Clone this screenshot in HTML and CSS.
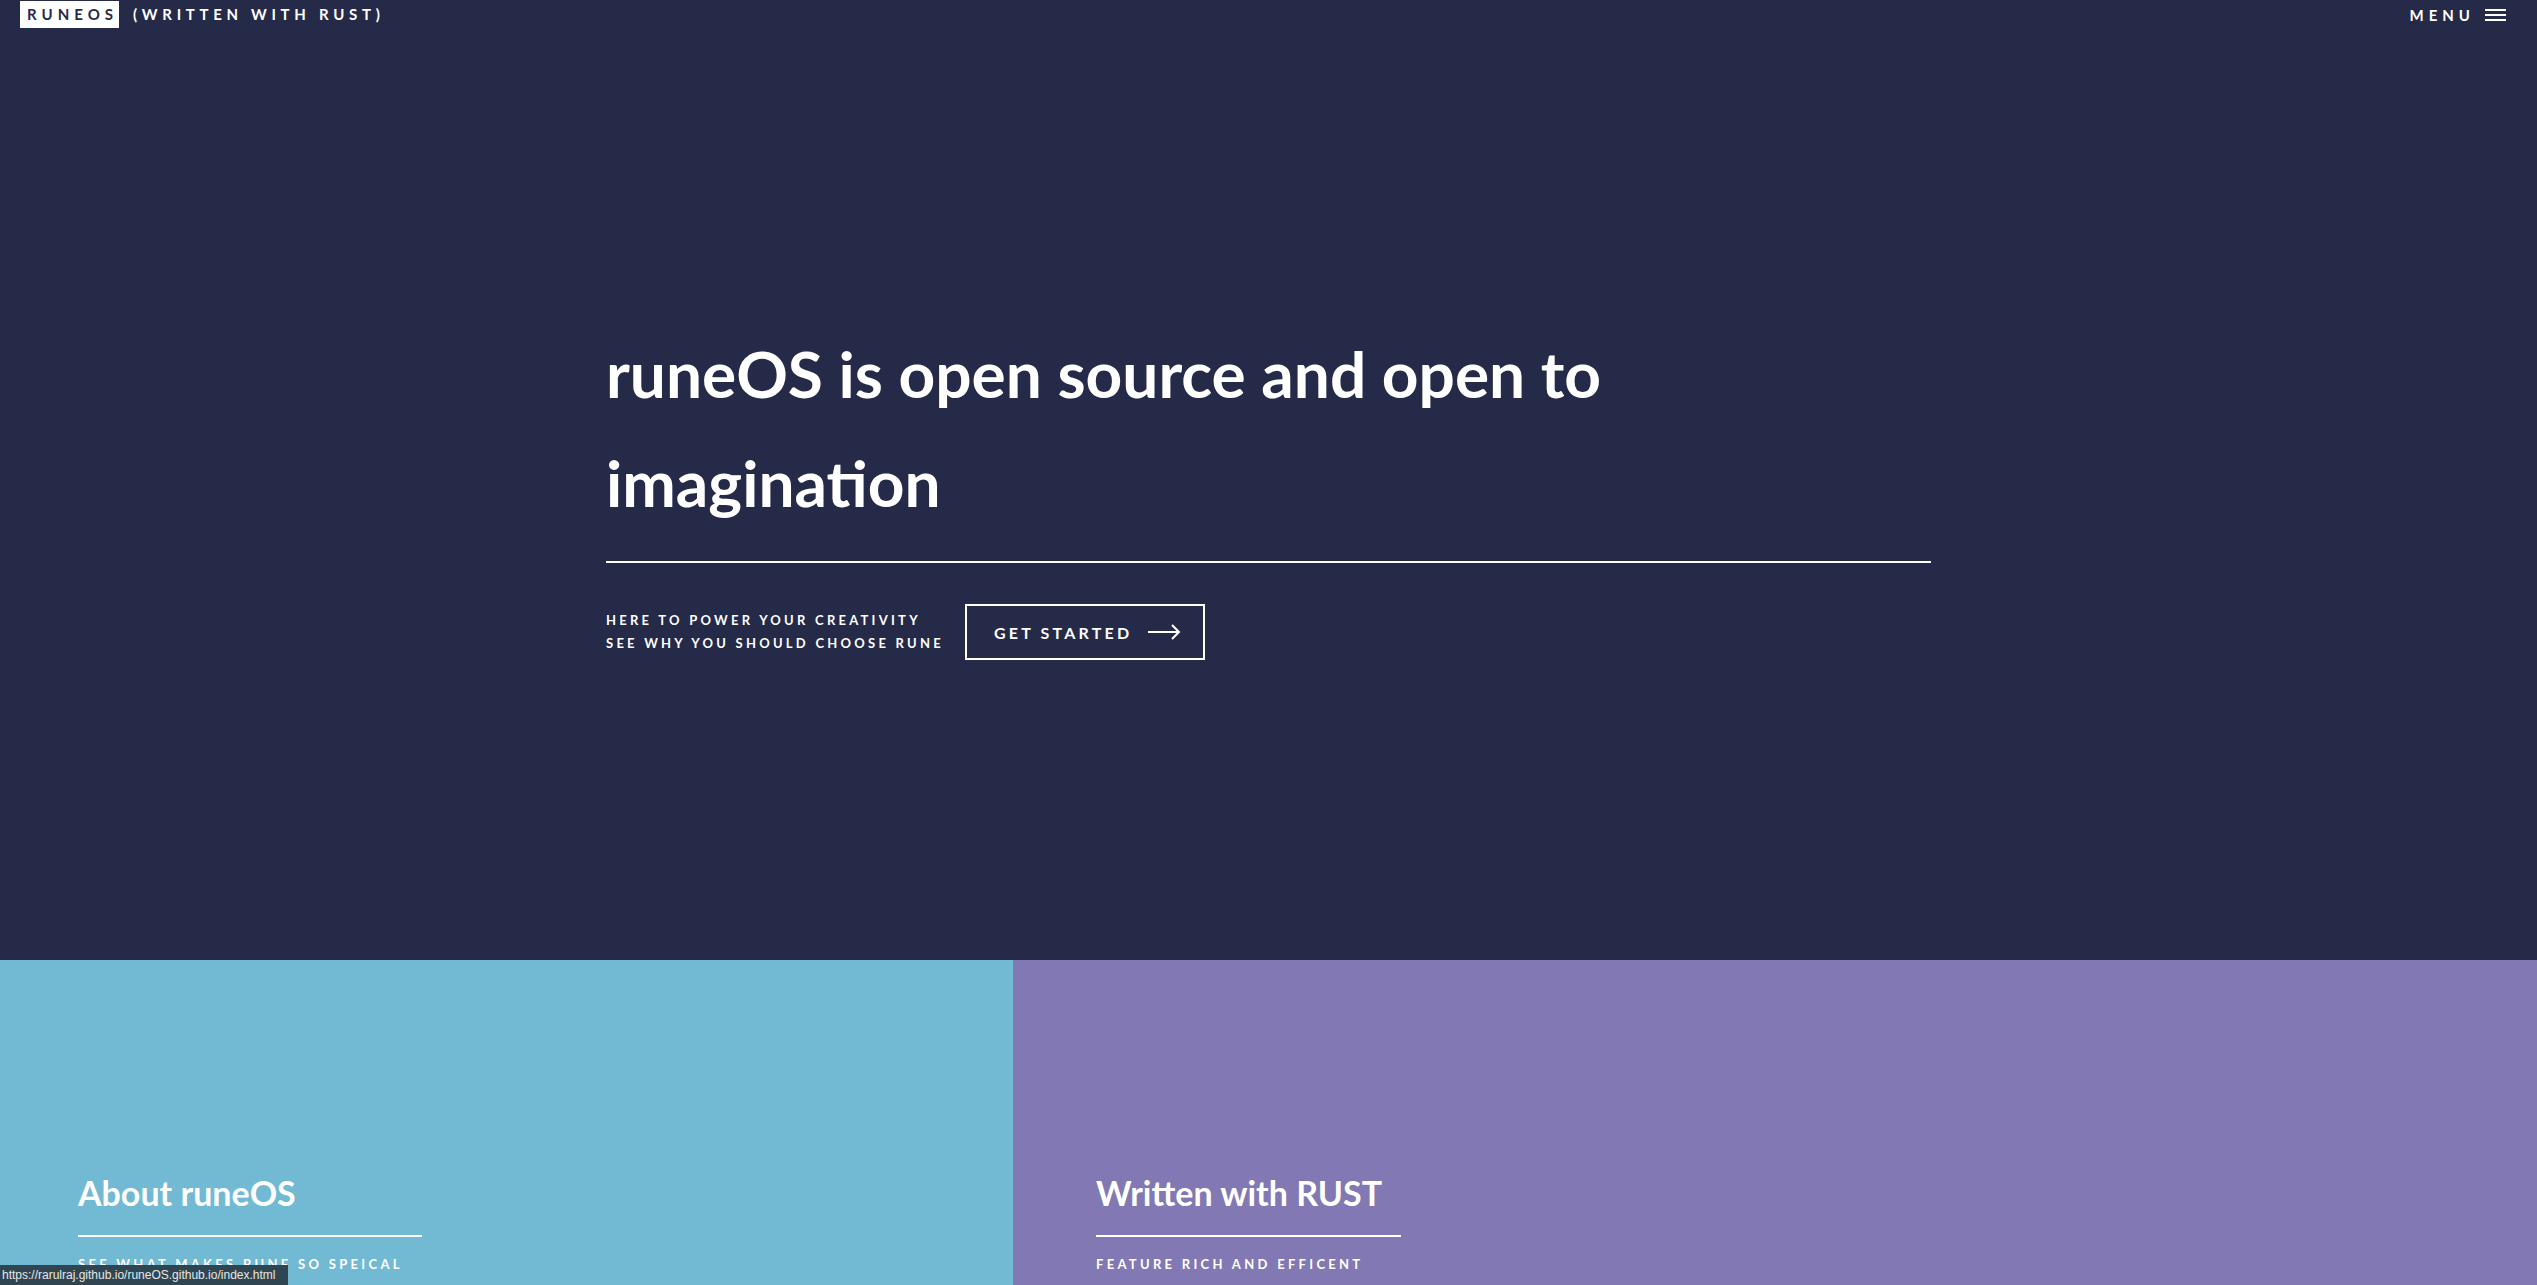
FILE: index.html
```html
<!DOCTYPE html>
<html lang="en">
<head>
<meta charset="utf-8">
<title>runeOS</title>
<link rel="stylesheet" href="styles.css">
</head>
<body>
<section class="hero">
  <header class="topbar">
    <div class="brand">
      <span class="logo">RUNEOS</span>
      <span class="tagline">(WRITTEN WITH RUST)</span>
    </div>
    <div class="menu">
      <span>MENU</span>
      <span class="burger"><i></i><i></i><i></i></span>
    </div>
  </header>
  <div class="hero-inner">
    <h1 class="title">runeOS is open source and open to imagination</h1>
    <div class="rule"></div>
    <div class="cta-row">
      <p class="cta-text">HERE TO POWER YOUR CREATIVITY<br>SEE WHY YOU SHOULD CHOOSE RUNE</p>
      <a class="btn" href="#">GET STARTED
        <svg class="arrow" width="33" height="16" viewBox="0 0 33 16"><path d="M0 8H31M24 1L31 8L24 15" fill="none" stroke="#fff" stroke-width="2"/></svg>
      </a>
    </div>
  </div>
</section>
<section class="panels">
  <div class="panel panel-about">
    <h2 class="panel-title">About runeOS</h2>
    <div class="panel-rule rule-about"></div>
    <p class="panel-sub">SEE WHAT MAKES RUNE SO SPEICAL</p>
  </div>
  <div class="panel panel-rust">
    <h2 class="panel-title">Written with RUST</h2>
    <div class="panel-rule rule-rust"></div>
    <p class="panel-sub">FEATURE RICH AND EFFICENT</p>
  </div>
</section>
<div class="status">https://rarulraj.github.io/runeOS.github.io/index.html</div>
</body>
</html>
```
FILE: styles.css
```css
* { box-sizing: border-box; }
html, body { margin: 0; padding: 0; }
body {
  font-family: "Lato", "Open Sans", sans-serif;
  color: #fff;
  background: #242a48;
  overflow: hidden;
}
.hero {
  height: 960px;
  background: #242a48;
  display: flex;
  flex-direction: column;
}
.topbar {
  display: flex;
  justify-content: space-between;
  align-items: flex-start;
  padding: 1px 31px 0 20px;
  height: 29px;
}
.brand { display: flex; align-items: center; gap: 14px; }
.logo {
  background: #fff;
  color: #242a48;
  font-weight: 700;
  font-size: 15px;
  letter-spacing: 5px;
  padding: 0 1px 0 7px;
  height: 27px;
  line-height: 27px;
}
.tagline {
  font-weight: 700;
  font-size: 15px;
  letter-spacing: 4.7px;
  line-height: 27px;
}
.menu {
  display: flex;
  align-items: center;
  gap: 10px;
  font-weight: 700;
  font-size: 15px;
  letter-spacing: 5px;
  height: 28px;
}
.burger { display: flex; flex-direction: column; gap: 3px; width: 21px; }
.burger i { display: block; height: 2px; background: #fff; }

.hero-inner {
  width: 1325px;
  margin: 0 auto;
  padding-top: 290px;
}
.title {
  margin: 0;
  font-weight: 700;
  font-size: 64px;
  line-height: 109px;
  width: 1080px;
}
.rule { height: 2px; background: #fff; margin-top: 24px; }
.cta-row {
  display: flex;
  align-items: center;
  gap: 21px;
  margin-top: 41px;
}
.cta-text {
  margin: 0;
  font-weight: 700;
  font-size: 13px;
  letter-spacing: 3.25px;
  line-height: 23px;
}
.btn {
  display: flex;
  align-items: center;
  gap: 16px;
  width: 240px;
  height: 56px;
  padding-left: 27px;
  border: 2px solid #fff;
  color: #fff;
  text-decoration: none;
  font-weight: 700;
  font-size: 16px;
  letter-spacing: 3.2px;
}
.arrow { display: block; }

.panels { display: flex; height: 600px; }
.panel { padding-top: 211px; }
.panel-about { width: 1013px; background: #72b9d3; padding-left: 78px; }
.panel-rust { flex: 1; background: #8279b4; padding-left: 83px; }
.panel-title {
  margin: 0;
  font-weight: 700;
  font-size: 34px;
  line-height: 44px;
}
.panel-rule { height: 2px; background: #fff; margin-top: 20px; }
.rule-about { width: 344px; }
.rule-rust { width: 305px; }
.panel-sub {
  margin: 19px 0 0;
  font-weight: 700;
  font-size: 13px;
  letter-spacing: 3.3px;
}
.status {
  position: fixed;
  left: 0;
  bottom: 0;
  width: 288px;
  height: 20px;
  line-height: 20px;
  padding: 0 2px;
  background: #2f4652;
  color: #e6e6e6;
  font-family: "Liberation Sans", sans-serif;
  font-size: 12px;
  white-space: nowrap;
  overflow: hidden;
}
```
